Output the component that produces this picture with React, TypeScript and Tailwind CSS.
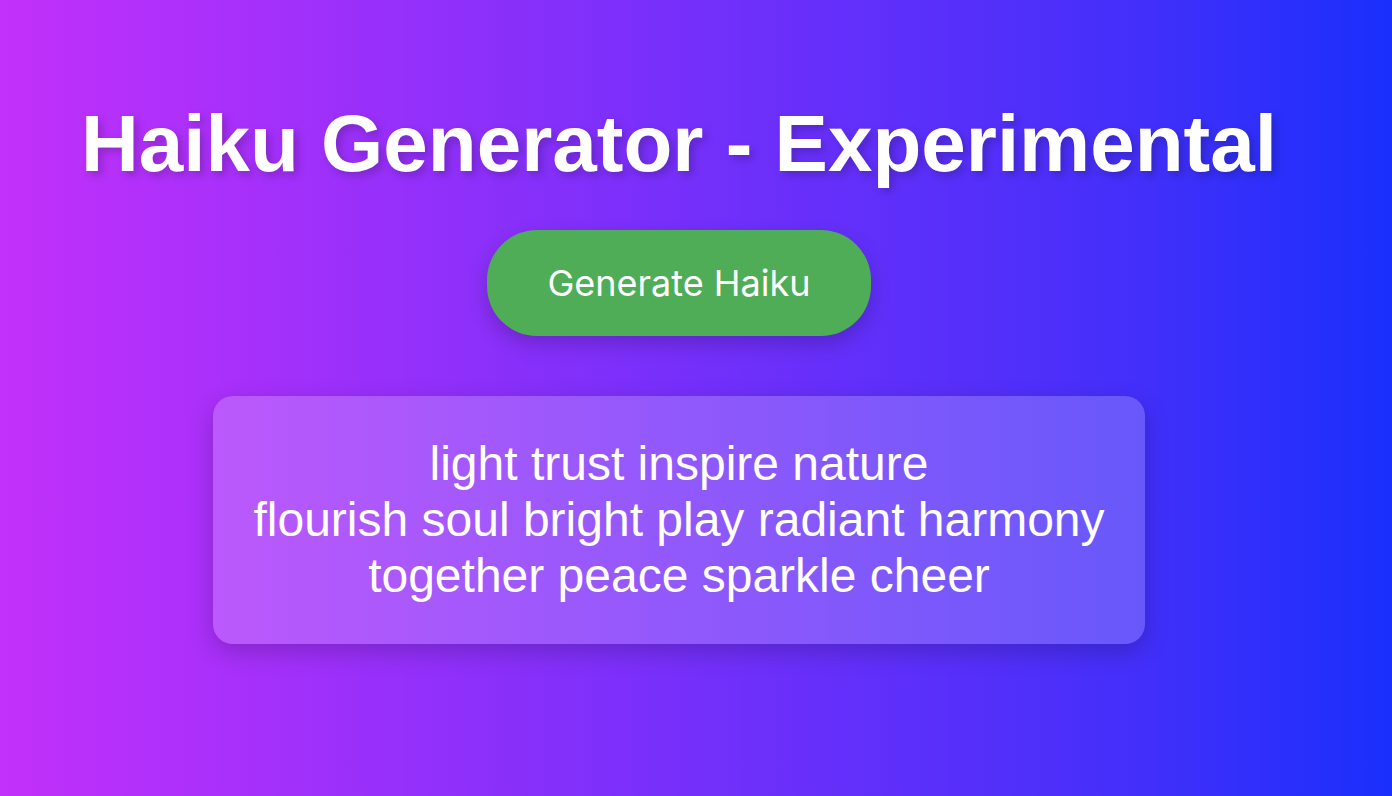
export default function App() {
  return (
    <main className="flex min-h-screen flex-col items-center justify-center bg-linear-to-r/srgb from-[#c230fa] via-[#432ffa] via-82% to-[#1a2ffc] pr-[34px] pb-[54px] font-['Liberation_Sans',Arial,sans-serif] text-white">
      <h1 className="mb-10 text-center text-[80px] leading-[92px] font-bold [text-shadow:4px_4px_8px_rgba(0,0,0,0.2)]">
        Haiku Generator - Experimental
      </h1>
      <button
        type="button"
        className="mb-[60px] rounded-[50px] bg-[#4fac57] px-[60px] py-[30px] font-[Inter,sans-serif] text-[36px] leading-[46px] shadow-[0_8px_20px_rgba(0,0,0,0.2)]"
      >
        Generate Haiku
      </button>
      <p className="rounded-[20px] bg-white/20 p-10 text-center text-[48px] leading-[56px] shadow-[0_8px_24px_rgba(0,0,0,0.2)]">
        light trust inspire nature
        <br />
        flourish soul bright play radiant harmony
        <br />
        together peace sparkle cheer
      </p>
    </main>
  );
}
